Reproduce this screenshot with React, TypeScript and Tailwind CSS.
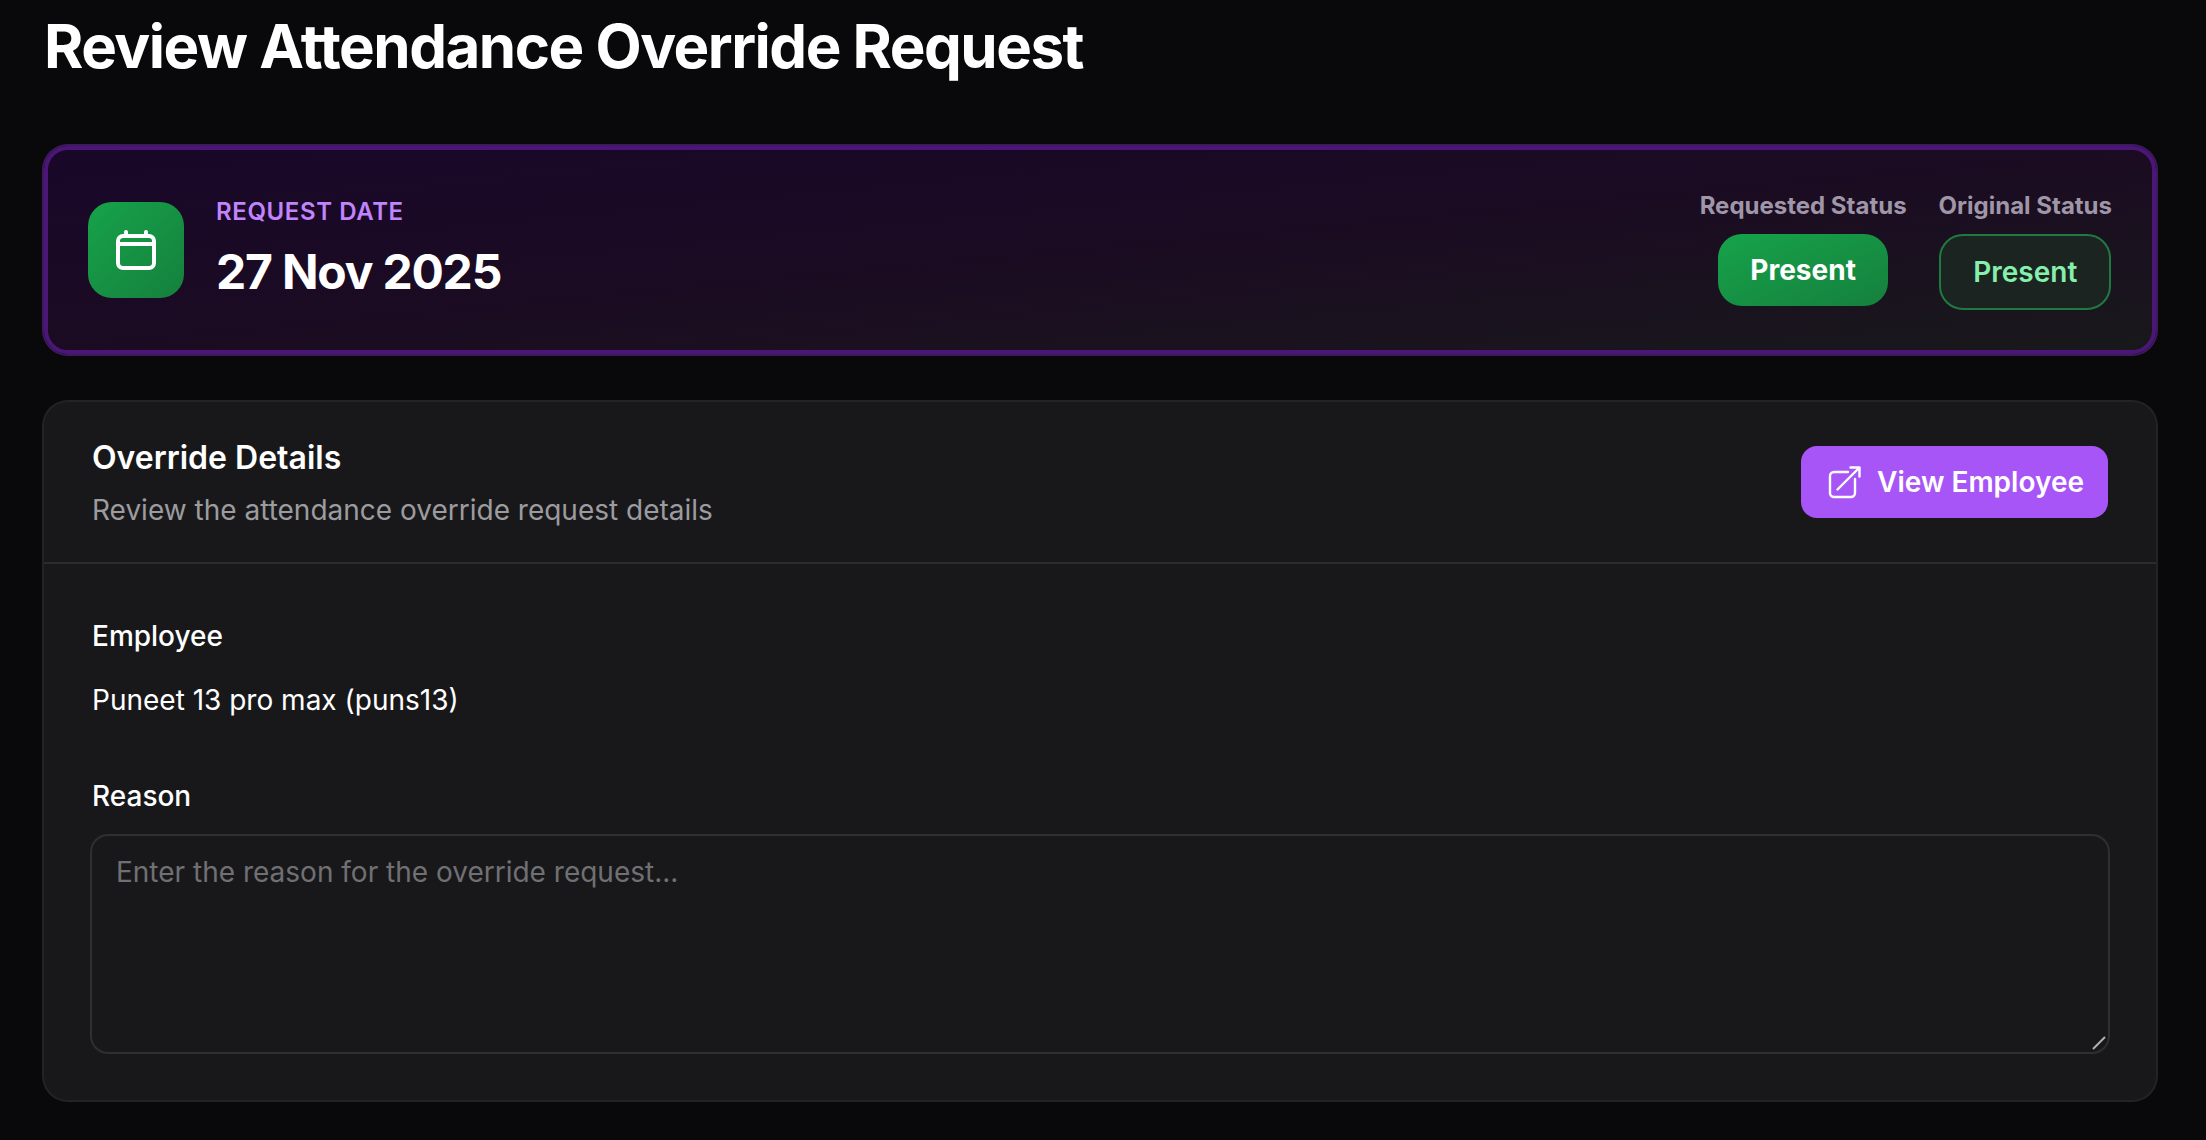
import { useId } from "react";

type Status = "Present" | "Absent";

interface IStatusColumnProps {
  label: string;
  status: Status;
  variant: "solid" | "outline";
}

function CalendarIcon() {
  return (
    <svg className="size-12" viewBox="0 0 48 48" fill="none" stroke="currentColor" strokeWidth="4" strokeLinecap="round" aria-hidden="true">
      <rect x="6" y="10" width="36" height="32" rx="5" />
      <path d="M6 18h36M14 6v4M34 6v4" />
    </svg>
  );
}

function OpenIcon() {
  return (
    <svg className="size-9" viewBox="0 0 36 36" fill="none" stroke="currentColor" strokeWidth="2.4" strokeLinecap="round" strokeLinejoin="round" aria-hidden="true">
      <path d="M23 8H9a4 4 0 0 0-4 4v17a4 4 0 0 0 4 4h17a4 4 0 0 0 4-4V15" />
      <path d="M12.5 25.5 34.5 3.5M25.5 3.5h9v9" />
    </svg>
  );
}

function StatusColumn({ label, status, variant }: IStatusColumnProps) {
  return (
    <div className="flex flex-col items-center gap-3">
      <p className="text-2xl font-bold text-[#9f96a8]">{label}</p>
      {variant === "solid" ? (
        <span className="rounded-3xl bg-linear-to-br from-[#16a34a] to-[#15803d] px-8 py-4 text-[28px]/10 font-bold text-white">
          {status}
        </span>
      ) : (
        <span className="rounded-3xl border-2 border-[#1f7a41] bg-[#1b2421] px-8 py-4 text-[28px]/10 font-semibold text-[#86efac]">
          {status}
        </span>
      )}
    </div>
  );
}

export default function App() {
  const reasonId = useId();

  return (
    <main className="min-h-screen bg-[#09090b] pr-[50px] pb-10 pl-11 font-['Inter',sans-serif] text-white">
      <h1 className="pt-2.5 text-[60px]/[72px] font-bold tracking-tight">
        Review Attendance Override Request
      </h1>

      <section className="mt-16 flex items-center justify-between rounded-3xl border-4 border-[#4c1679] bg-linear-to-br from-[#190729] via-[#1b0b22] to-[#18181b] p-10 ring-2 ring-[#3d1a5c]">
        <div className="flex items-center gap-8">
          <div className="flex size-24 items-center justify-center rounded-3xl bg-linear-to-br from-[#16a34a] to-[#15803d]">
            <CalendarIcon />
          </div>
          <div className="flex flex-col gap-3">
            <p className="text-2xl font-semibold tracking-wide text-[#c084fc] uppercase">Request Date</p>
            <p className="text-5xl/16 font-bold tracking-tight">27 Nov 2025</p>
          </div>
        </div>
        <div className="flex items-start gap-8">
          <StatusColumn label="Requested Status" status="Present" variant="solid" />
          <StatusColumn label="Original Status" status="Present" variant="outline" />
        </div>
      </section>

      <section className="mt-12 rounded-3xl bg-[#18181b] ring-2 ring-[#232325]">
        <header className="flex items-center justify-between border-b-2 border-[#2c2c2f] px-12 py-8">
          <div className="flex flex-col gap-2">
            <h2 className="text-[32px]/12 font-semibold">Override Details</h2>
            <p className="text-[28px]/10 text-[#9c9c9f]">Review the attendance override request details</p>
          </div>
          <button type="button" className="flex items-center gap-4 rounded-2xl bg-[#a855f7] px-6 py-4 text-[28px]/10 font-semibold">
            <OpenIcon />
            View Employee
          </button>
        </header>

        <div className="flex flex-col gap-12 p-12">
          <div className="flex flex-col gap-4 text-[28px]/12">
            <h3 className="font-medium">Employee</h3>
            <p>Puneet 13 pro max (puns13)</p>
          </div>
          <div className="flex flex-col gap-4">
            <label htmlFor={reasonId} className="text-[28px]/12 font-medium">Reason</label>
            <div className="relative">
              <textarea
                id={reasonId}
                className="block h-54 w-full resize-y rounded-2xl px-6 py-4 text-[28px]/10 ring-2 ring-[#2f2f32] outline-none placeholder:text-[#707073] [&::-webkit-resizer]:bg-transparent"
                placeholder="Enter the reason for the override request..."
              />
              {/* resize grip */}
              <svg className="pointer-events-none absolute right-0.5 bottom-0.5 size-3.5 text-[#b0b0b0]" viewBox="0 0 14 14" stroke="currentColor" strokeWidth="2" aria-hidden="true">
                <path d="M1 13 13 1" />
              </svg>
            </div>
          </div>
        </div>
      </section>
    </main>
  );
}
